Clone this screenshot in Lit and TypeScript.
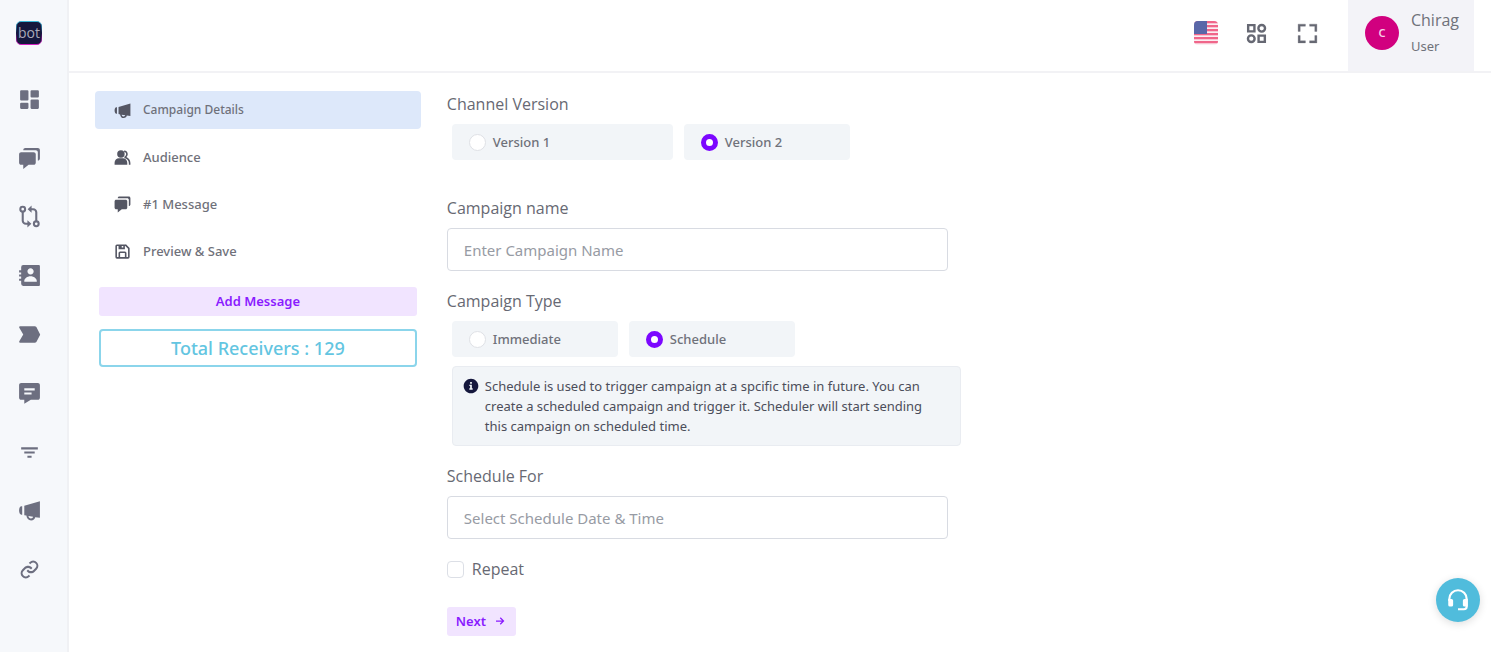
import { LitElement, html, css, svg } from "lit";
import { customElement, state } from "lit/decorators.js";

const icons: Record<string, unknown> = {
  dashboard: svg`<path d="M4 13h6a1 1 0 0 0 1-1V4a1 1 0 0 0-1-1H4a1 1 0 0 0-1 1v8a1 1 0 0 0 1 1zm-1 7a1 1 0 0 0 1 1h6a1 1 0 0 0 1-1v-4a1 1 0 0 0-1-1H4a1 1 0 0 0-1 1v4zm10 0a1 1 0 0 0 1 1h6a1 1 0 0 0 1-1v-7a1 1 0 0 0-1-1h-6a1 1 0 0 0-1 1v7zm1-10h6a1 1 0 0 0 1-1V4a1 1 0 0 0-1-1h-6a1 1 0 0 0-1 1v5a1 1 0 0 0 1 1z"/>`,
  chat: svg`<path d="M4 18h2v4.081L11.101 18H16c1.103 0 2-.897 2-2V8c0-1.103-.897-2-2-2H4c-1.103 0-2 .897-2 2v8c0 1.103.897 2 2 2z"/><path d="M20 2H8c-1.103 0-2 .897-2 2h12c1.103 0 2 .897 2 2v8c1.103 0 2-.897 2-2V4c0-1.103-.897-2-2-2z"/>`,
  flow: svg`<g fill="none" stroke="currentColor" stroke-width="2"><circle cx="5.5" cy="5" r="2.3"/><circle cx="18.500" cy="19" r="2.300"/><path d="M5.500 7.500V16a3 3 0 0 0 3 3H11M18.500 16.500V8a3 3 0 0 0-3-3H13"/></g><path d="M10 15.500v7l3.800-3.500zM14 1.500v7L10.200 5z"/>`,
  contact: svg`<path d="M21 2H6a2 2 0 0 0-2 2v3H2v2h2v2H2v2h2v2H2v2h2v3a2 2 0 0 0 2 2h15a1 1 0 0 0 1-1V3a1 1 0 0 0-1-1zm-8 2.999c1.648 0 3 1.351 3 3A3.012 3.012 0 0 1 13 11c-1.647 0-3-1.353-3-3.001 0-1.649 1.353-3 3-3zM19 18H7v-.75c0-2.219 2.705-4.500 6-4.500s6 2.281 6 4.500V18z"/>`,
  label: svg`<path d="M3 4h14a2 2 0 0 1 1.600.8L22 11.400a1 1 0 0 1 0 1.200l-3.400 6.600A2 2 0 0 1 17 20H3a1 1 0 0 1-.8-1.500L6 12 2.200 5.500A1 1 0 0 1 3 4z"/>`,
  message: svg`<path fill-rule="evenodd" d="M20 2H4c-1.103 0-2 .897-2 2v12c0 1.103.897 2 2 2h3v3.767L13.277 18H20c1.103 0 2-.897 2-2V4c0-1.103-.897-2-2-2zM7 7h10v2H7zm0 4h7v2H7z"/>`,
  filter: svg`<path d="M7 11h10v2H7zM4 7h16v2H4zm6 8h4v2h-4z"/>`,
  megaphone: svg`<path d="M5 8H4.200C2.900 8 2 9.800 2 12s.9 4 2.200 4H5zM7 7.500v9l2 .4c.3 3 2 4.600 4.500 4.600 2.200 0 3.700-1.200 4-3.100L22 19V3zm4 9.900 4.500.700c-.4 1-1 1.500-2.100 1.500-1.300 0-2.200-.8-2.400-2.200z" fill-rule="evenodd"/>`,
  link: svg`<path d="M8.465 11.293c1.133-1.133 3.109-1.133 4.242 0l.707.707 1.414-1.414-.707-.707c-.943-.944-2.199-1.465-3.535-1.465s-2.592.521-3.535 1.465L4.929 12a5.008 5.008 0 0 0 0 7.071 4.983 4.983 0 0 0 3.535 1.462A4.982 4.982 0 0 0 12 19.071l.707-.707-1.414-1.414-.707.707a3.007 3.007 0 0 1-4.243 0 3.005 3.005 0 0 1 0-4.243l2.122-2.121z"/><path d="M12 4.929l-.707.707 1.414 1.414.707-.707a3.007 3.007 0 0 1 4.243 0 3.005 3.005 0 0 1 0 4.243l-2.122 2.121c-1.133 1.133-3.109 1.133-4.242 0L10.586 12l-1.414 1.414.707.707c.943.944 2.199 1.465 3.535 1.465s2.592-.521 3.535-1.465L19.071 12a5.008 5.008 0 0 0 0-7.071 5.006 5.006 0 0 0-7.071 0z"/>`,
  audience: svg`<circle cx="10" cy="7.500" r="4.700"/><path d="M7.500 13h5a5.500 5.500 0 0 1 5.500 5.500V21H2v-2.500A5.500 5.500 0 0 1 7.500 13z"/><path d="M14 3c3 .1 4.600 2 4.600 4.500 0 1.700-.7 3-1.800 3.900 3 1.300 5.200 4 5.200 7.600V21h-2v-2c0-3.700-2.500-5.700-5.600-6.500v-1.700c1.400-.6 2.200-1.700 2.200-3.300s-1-2.500-2.600-2.500z"/>`,
  save: svg`<path fill-rule="evenodd" d="M5 21h14a2 2 0 0 0 2-2V8a1 1 0 0 0-.29-.71l-4-4A1 1 0 0 0 16 3H5a2 2 0 0 0-2 2v14a2 2 0 0 0 2 2zm10-2H9v-5h6zM13 7h-2V5h2zM5 5h2v4h8V5h.590L19 8.410V19h-2v-5a2 2 0 0 0-2-2H9a2 2 0 0 0-2 2v5H5z"/>`,
  apps: svg`<g fill="none" stroke="currentColor" stroke-width="2.300"><path d="M4 4h6v6H4zM14 14h6v6h-6z"/><circle cx="17" cy="7" r="3.200"/><circle cx="7" cy="17" r="3.200"/></g>`,
  fullscreen: svg`<path d="M5 5h5V3H3v7h2zm5 14H5v-5H3v7h7zm11-5h-2v5h-5v2h7zm-2-4h2V3h-7v2h5z" stroke="currentColor" stroke-width=".3"/>`,
  info: svg`<path fill-rule="evenodd" d="M12 1C5.900 1 1 5.900 1 12s4.900 11 11 11 11-4.900 11-11S18.100 1 12 1zm-1.300 5h2.600v2.600h-2.600zM9.500 10h3.800v5.500h1.200v2h-5v-2h1.200V12H9.500z"/>`,
  arrow: svg`<path fill="none" stroke="currentColor" stroke-width="2.500" d="M4 12h15M12.500 5.500 19 12l-6.500 6.500"/>`,
  headset: svg`<g fill="none" stroke="currentColor" stroke-width="2"><path d="M4 13v-2a8 8 0 0 1 16 0v7a2.500 2.500 0 0 1-2.500 2.500H12"/></g><path d="M3 11h3a1.500 1.500 0 0 1 1.500 1.500v4A1.500 1.500 0 0 1 6 18H4.500A1.500 1.500 0 0 1 3 16.500zM21 11h-3a1.500 1.500 0 0 0-1.500 1.500v4A1.500 1.500 0 0 0 18 18h3z"/>`,
};

const icon = (name: string) =>
  html`<svg class="icon" viewBox="0 0 24 24" fill="currentColor" aria-hidden="true">${icons[name]}</svg>`;

const NAV = [
  ["dashboard", "Dashboard"], ["chat", "Chats"], ["flow", "Flows"], ["contact", "Contacts"], ["label", "Labels"],
  ["message", "Templates"], ["filter", "Segments"], ["megaphone", "Campaigns"], ["link", "Links"],
];

const STEPS = [
  ["megaphone", "Campaign Details"], ["audience", "Audience"], ["chat", "#1 Message"], ["save", "Preview & Save"],
];

@customElement("app-root")
export class AppRoot extends LitElement {
  @state() private step = 0;
  @state() private version = "Version 2";
  @state() private type = "Schedule";

  static styles = css`
    :host { display: flex; min-height: 100vh; background: #fff; color: #6f717a; font: 500 13px/20px "Noto Sans", "Open Sans", sans-serif; }
    * { box-sizing: border-box; }
    button, input { font: inherit; color: inherit; margin: 0; }
    button { border: 0; background: none; padding: 0; cursor: pointer; }
    .icon { display: block; width: 16px; height: 16px; flex: none; }

    .sidebar { flex: none; width: 69px; background: #f6f8fb; border-right: 2px solid #f0f1f4; padding: 20px 9px 0 0; }
    .logo { display: block; width: 26px; height: 26px; margin: 0 auto; }
    .logo svg { display: block; }
    .nav { display: flex; flex-direction: column; height: 529px; margin-top: 24px; }
    .nav a { flex: 1; display: grid; place-items: center; color: #6d6f80; }
    .nav .icon { width: 25px; height: 25px; }

    .page { flex: 1; min-width: 0; }
    .topbar { display: flex; justify-content: flex-end; align-items: center; height: 73px; padding-right: 17px; border-bottom: 2px solid #f2f2f5; }
    .tools { display: flex; align-items: center; gap: 26px; margin-right: 28px; padding-bottom: 5px; color: #666873; }
    .tools .icon { width: 25px; height: 25px; }
    .tools .flag { width: 24px; height: 24px; }
    .user { display: flex; align-items: center; gap: 12px; height: 100%; padding: 0 15px 5px 17px; background: #f3f3f8; text-align: left; font-weight: 400; }
    .avatar { display: grid; place-items: center; width: 34px; height: 34px; border-radius: 50%; background: #d1007f; color: #f5cfe6; font-size: 11px; font-weight: 600; }
    .who { display: flex; flex-direction: column; gap: 6px; }
    .name, .label, .repeat { font-family: "Open Sans", "Noto Sans", sans-serif; font-size: 16px; }

    .content { display: grid; grid-template-columns: 8fr 25fr; gap: 26px; padding: 18px 26px 16px; }
    .steps { display: flex; flex-direction: column; gap: 9px; }
    .step { display: flex; align-items: center; gap: 11px; width: 100%; height: 38px; padding: 0 18px; border-radius: 4px; text-align: left; }
    .step.active { background: #dde8fa; font-size: 12px; }
    .step .icon { width: 19px; height: 19px; color: #545663; }
    .actions { display: grid; gap: 13px; padding: 17px 4px 0; }
    .soft { height: 29px; padding-bottom: 2px; border-radius: 3px; background: #f1e4ff; color: #8a1bff; font-weight: 600; }
    .total { border: 2px solid #8bd5eb; border-radius: 4px; padding: 7px; text-align: center; font-size: 18px; color: #63c5e1; }

    .form { display: flex; flex-direction: column; gap: 20px; width: 100%; max-width: 514px; padding-top: 3px; }
    .field { display: flex; flex-direction: column; gap: 10px; min-width: 0; }
    .label { display: block; }
    .text { width: 100%; max-width: 501px; height: 43px; border: 1px solid #d8dbe2; border-radius: 4px; padding: 0 16px; font-size: 15px; font-weight: 400; background: #fff; }
    .text::placeholder { color: #979ba4; opacity: 1; }
    .options { display: flex; gap: 11px; padding-left: 5px; }
    .versions { margin-bottom: 18px; }
    .option { display: flex; align-items: center; gap: 7px; width: 166px; height: 36px; padding: 0 17px; border-radius: 4px; background: #f2f5f8; }
    .option.wide { width: 221px; }
    .option input { appearance: none; width: 17px; height: 17px; border: 1px solid #dfe1e6; border-radius: 50%; background: #fff; }
    .option input:checked { border: 5px solid #7c07ff; }
    .note { display: flex; gap: 6px; margin: -1px 0 0 5px; padding: 9px 10px; border: 1px solid #e9ecf1; border-radius: 4px; background: #f2f5f8; color: #4c4e5a; font-weight: 400; }
    .note p { margin: 0; max-width: 450px; }
    .note .icon { margin-top: 2px; color: #15173d; }
    .repeat { display: flex; align-items: center; gap: 8px; width: fit-content; }
    .label, .repeat { font-weight: 400; color: #676973; }
    .repeat input { appearance: none; width: 17px; height: 17px; border: 1px solid #dcdfe6; border-radius: 4px; background: #fff; }
    .next { display: flex; align-items: center; gap: 8px; width: 69px; margin-top: 8px; padding: 0 9px 2px; }
    .next .icon { width: 12px; height: 12px; }

    .support { position: fixed; right: 11px; bottom: 30px; display: grid; place-items: center; width: 44px; height: 44px; border-radius: 50%; background: #50bcdc; color: #fff; box-shadow: 0 2px 8px #0002; }
    .support .icon { width: 26px; height: 26px; }
  `;

  private option(group: string, text: string, current: string, pick: () => void, wide = false) {
    return html`<label class="option ${wide ? "wide" : ""}">
      <input type="radio" name=${group} .checked=${current === text} @change=${pick}>${text}
    </label>`;
  }

  render() {
    return html`
      <aside class="sidebar">
        <a class="logo" href="#" aria-label="Home">
          <svg width="26" height="26" viewBox="0 0 26 26">
            <defs><linearGradient id="edge" x2="0" y2="1"><stop stop-color="#39b6d8"/><stop offset=".5" stop-color="#15173d"/><stop offset="1" stop-color="#d020c0"/></linearGradient></defs>
            <rect x=".5" y="1.500" width="25" height="23" rx="4.500" fill="#15173d" stroke="url(#edge)"/>
            <text x="13" y="18" text-anchor="middle" font-family="Open Sans, sans-serif" font-size="14" fill="#a9a9b8">bot</text>
          </svg>
        </a>
        <nav class="nav">${NAV.map(([id, title]) => html`<a href="#" aria-label=${title}>${icon(id)}</a>`)}</nav>
      </aside>
      <div class="page">
        <header class="topbar">
          <div class="tools">
            <button aria-label="Language">
              <svg class="icon flag" viewBox="0 0 24 24">
                <defs><clipPath id="round"><rect width="24" height="24" rx="4"/></clipPath></defs>
                <g clip-path="url(#round)">
                  <rect width="24" height="24" fill="#fbeef2"/>
                  ${[0, 4, 8, 12, 16, 20].map((y) => svg`<rect y=${y} width="24" height="2.300" fill="#f0668a"/>`)}
                  <rect width="13" height="13" fill="#5a67a8"/>
                </g>
              </svg>
            </button>
            <button aria-label="Apps">${icon("apps")}</button>
            <button aria-label="Full screen">${icon("fullscreen")}</button>
          </div>
          <button class="user">
            <span class="avatar">C</span>
            <span class="who"><span class="name">Chirag</span><span>User</span></span>
          </button>
        </header>
        <main class="content">
          <section>
            <div class="steps">
              ${STEPS.map(([id, title], i) => html`<button class="step ${i === this.step ? "active" : ""}" @click=${() => (this.step = i)}>${icon(id)}${title}</button>`)}
            </div>
            <div class="actions">
              <button class="soft">Add Message</button>
              <div class="total">Total Receivers : 129</div>
            </div>
          </section>
          <form class="form" @submit=${(e: Event) => e.preventDefault()}>
            <div class="field versions" role="radiogroup" aria-labelledby="version-label">
              <span class="label" id="version-label">Channel Version</span>
              <div class="options">
                ${this.option("version", "Version 1", this.version, () => (this.version = "Version 1"), true)}
                ${this.option("version", "Version 2", this.version, () => (this.version = "Version 2"))}
              </div>
            </div>
            <div class="field">
              <label class="label" for="name">Campaign name</label>
              <input class="text" id="name" type="text" placeholder="Enter Campaign Name">
            </div>
            <div class="field" role="radiogroup" aria-labelledby="type-label">
              <span class="label" id="type-label">Campaign Type</span>
              <div class="options">
                ${this.option("type", "Immediate", this.type, () => (this.type = "Immediate"))}
                ${this.option("type", "Schedule", this.type, () => (this.type = "Schedule"))}
              </div>
              <div class="note">${icon("info")}<p>Schedule is used to trigger campaign at a spcific time in future. You can create a scheduled campaign and trigger it. Scheduler will start sending this campaign on scheduled time.</p></div>
            </div>
            <div class="field">
              <label class="label" for="when">Schedule For</label>
              <input class="text" id="when" type="text" placeholder="Select Schedule Date &amp; Time">
            </div>
            <label class="repeat"><input type="checkbox">Repeat</label>
            <button class="soft next" type="submit">Next ${icon("arrow")}</button>
          </form>
        </main>
      </div>
      <button class="support" aria-label="Support">${icon("headset")}</button>
    `;
  }
}
